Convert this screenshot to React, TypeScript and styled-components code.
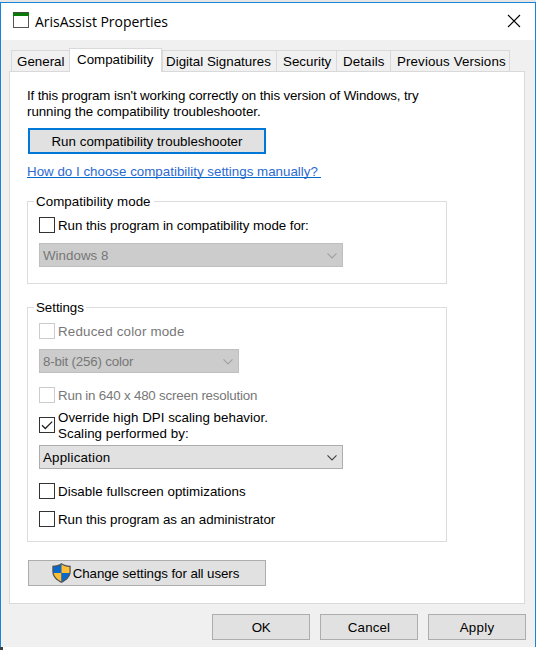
import React from 'react';
import styled, { createGlobalStyle } from 'styled-components';

const GlobalStyle = createGlobalStyle`
  *, *::before, *::after { box-sizing: border-box; }
  body { margin: 0; background: #fff; }
`;

const Desktop = styled.div`
  width: 542px;
  height: 650px;
  overflow: hidden;
  background: #fff;
  color: #000;
  font: 13.333px/16px "Liberation Sans", Arial, sans-serif;
`;

const BackdropStrip = styled.div`
  height: 2px;
  width: 536px;
  background: #e6e6e6;
`;

const BackdropCorner = styled.div`
  width: 3px;
  height: 3px;
  background: #3c4046;
`;

const Window = styled.div`
  display: flex;
  flex-direction: column;
  width: 536px;
  height: 645px;
  border: 1px solid #1883d7;
  border-bottom: 0;
  background: #f0f0f0;
`;

const TitleBar = styled.header`
  display: flex;
  flex: none;
  height: 37px;
  padding: 9px 13px 0 12px;
  background: #fff;
`;

const Title = styled.h1`
  flex: 1;
  margin: 0 0 0 6px;
  font: 400 14px/20px "Open Sans", sans-serif;
  letter-spacing: -0.03px;
`;

const CloseButton = styled.button`
  width: 16px;
  height: 16px;
  margin-top: 1px;
  padding: 0;
  border: 0;
  background: none;
  svg { display: block; }
`;

const Tabs = styled.nav`
  display: flex;
  align-items: flex-end;
  height: 31px;
  padding-left: 10px;
`;

const Tab = styled.button<{
  $width: number;
  $spacing: number;
  $inset?: number;
  $active?: boolean;
  $last?: boolean;
}>`
  display: flex;
  flex: none;
  align-items: flex-start;
  width: ${p => p.$width}px;
  height: ${p => (p.$active ? 24 : 21)}px;
  margin-bottom: ${p => (p.$active ? '-1px' : '0')};
  padding: 3px 0 0 ${p => p.$inset ?? 5}px;
  border: 1px solid #d9d9d9;
  border-bottom: 0;
  border-right-width: ${p => (p.$active || p.$last ? 1 : 0)}px;
  background: ${p => (p.$active ? '#fff' : '#f0f0f0')};
  z-index: ${p => (p.$active ? 1 : 0)};
  color: inherit;
  font: inherit;
  letter-spacing: ${p => p.$spacing}px;
  white-space: nowrap;
`;

const Panel = styled.main`
  flex: none;
  width: 516px;
  height: 533px;
  margin-left: 8px;
  padding: 16px 0 0 17px;
  border: 1px solid #d9d9d9;
  background: #fff;
`;

const Text = styled.span<{ $spacing?: number }>`
  display: block;
  letter-spacing: ${p => p.$spacing ?? 0}px;
  white-space: nowrap;
`;

const HelpLink = styled.a`
  display: block;
  width: 294px;
  height: 18px;
  margin-top: 10px;
  background: linear-gradient(#0066cc, #0066cc) 0 13px / 100% 1px no-repeat;
  color: #2b6bd0;
  letter-spacing: 0.01px;
  white-space: nowrap;
`;

const Button = styled.button<{ $width: number; $primary?: boolean; $spacing: number }>`
  display: flex;
  flex: none;
  align-items: center;
  justify-content: center;
  width: ${p => p.$width}px;
  height: 26px;
  padding: 1px 0 0;
  border: ${p => (p.$primary ? '2px solid #0078d7' : '1px solid #adadad')};
  background: #e1e1e1;
  color: inherit;
  font: inherit;
  letter-spacing: ${p => p.$spacing}px;
  white-space: nowrap;
`;

const AdminButton = styled(Button)`
  gap: 2px;
  padding: 1px 3px 0 0;
  svg { margin-top: -2px; }
`;

const TroubleshootArea = styled.div`
  margin: 8px 0 0 1px;
`;

const AdminArea = styled.div`
  margin: 18px 0 0 1px;
`;

const Group = styled.section<{ $height: number; $gap: number }>`
  width: 420px;
  height: ${p => p.$height}px;
  margin-top: ${p => p.$gap}px;
  padding-left: 11px;
  border: 1px solid #dcdcdc;
`;

const GroupTitle = styled.h2<{ $width: number; $spacing: number }>`
  width: ${p => p.$width}px;
  height: 16px;
  margin: -8px 0 7px -5px;
  padding-left: 2px;
  background: #fff;
  font: inherit;
  letter-spacing: ${p => p.$spacing}px;
  white-space: nowrap;
`;

const OptionRow = styled.label<{ $gap?: number; $disabled?: boolean }>`
  display: flex;
  gap: 3px;
  margin-top: ${p => p.$gap ?? 0}px;
  color: ${p => (p.$disabled ? '#777' : '#000')};
`;

const Box = styled.span<{ $disabled?: boolean; $offset?: number }>`
  flex: none;
  width: 16px;
  height: 16px;
  margin-top: ${p => p.$offset ?? 0}px;
  border: 1px solid ${p => (p.$disabled ? '#ccc' : '#333')};
  background: #fff;
  svg { display: block; }
`;

const OptionText = styled.span<{ $top?: number }>`
  height: ${p => (p.$top === 0 ? 32 : 16)}px;
  padding-top: ${p => p.$top ?? 1}px;
`;

const Select = styled.div<{ $width: number; $gap: number; $disabled?: boolean }>`
  display: flex;
  align-items: center;
  justify-content: space-between;
  width: ${p => p.$width}px;
  height: 24px;
  margin-top: ${p => p.$gap}px;
  padding: 1px 5px 0 3px;
  border: 1px solid ${p => (p.$disabled ? '#bfbfbf' : '#adadad')};
  background: ${p => (p.$disabled ? '#ccc' : '#e1e1e1')};
  color: ${p => (p.$disabled ? '#777' : '#000')};
`;

const Footer = styled.footer`
  display: flex;
  gap: 10px;
  justify-content: flex-end;
  padding: 10px 9px 0 0;
`;

const WindowIcon = () => (
  <svg width="16" height="16" viewBox="0 0 16 16" shapeRendering="crispEdges">
    <rect x="0.5" y="0.5" width="15" height="15" fill="#fff" stroke="#555" />
    <rect x="0" y="0" width="16" height="4" fill="#087a08" />
    <path d="M0 .5H16" stroke="#3f503f" />
  </svg>
);

const Chevron = ({ color }: { color: string }) => (
  <svg width="10" height="6" viewBox="0 0 10 6" fill="none" stroke={color} strokeWidth="1.1">
    <path d="M.5 .4 5 4.900 9.500 .4" />
  </svg>
);

const Shield = () => (
  <svg width="19" height="20" viewBox="0 0 19 20">
    <path d="M9.500 0C7.300 1.800 4 2.700 .3 2.800v5.700c0 5.300 4 9 9.200 11.400 5.200-2.400 9.200-6.100 9.200-11.400V2.800C15 2.700 11.700 1.800 9.500 0Z" fill="#50555a" />
    <path d="M9.500 1.500C7.300 3 4.700 3.800 1.600 4V10h7.900Z" fill="#0868cc" />
    <path d="M9.500 1.500c2.200 1.500 4.800 2.300 7.900 2.500V10H9.500Z" fill="#ffbd35" />
    <path d="M1.700 10c.7 3.800 3.800 6.600 7.800 8.600V10Z" fill="#ffbd35" />
    <path d="M17.300 10c-.7 3.800-3.800 6.600-7.800 8.600V10Z" fill="#0868cc" />
  </svg>
);

interface OptionProps {
  label: string;
  spacing: number;
  gap?: number;
  disabled?: boolean;
}

const Option = ({ label, spacing, gap, disabled }: OptionProps) => (
  <OptionRow $gap={gap} $disabled={disabled}>
    <Box $disabled={disabled} />
    <OptionText><Text $spacing={spacing}>{label}</Text></OptionText>
  </OptionRow>
);

interface ComboProps extends OptionProps {
  width: number;
}

const Combo = ({ label, spacing, gap = 10, width, disabled }: ComboProps) => (
  <Select $width={width} $gap={gap} $disabled={disabled}>
    <Text $spacing={spacing}>{label}</Text>
    <Chevron color={disabled ? '#a0a0a0' : '#404040'} />
  </Select>
);

export default function App() {
  return (
    <Desktop>
      <GlobalStyle />
      <BackdropStrip />
      <Window>
        <TitleBar>
          <WindowIcon />
          <Title>ArisAssist Properties</Title>
          <CloseButton aria-label="Close">
            <svg width="16" height="16" viewBox="0 0 16 16" stroke="#000" strokeWidth="1.1">
              <path d="M2 2 14 14M14 2 2 14" />
            </svg>
          </CloseButton>
        </TitleBar>
        <Tabs>
          <Tab $width={58} $spacing={0.01}>General</Tab>
          <Tab $width={93} $spacing={0.01} $inset={7} $active>Compatibility</Tab>
          <Tab $width={114} $spacing={0.02} $inset={3}>Digital Signatures</Tab>
          <Tab $width={60} $spacing={0.02} $inset={6}>Security</Tab>
          <Tab $width={54} $spacing={0.12} $inset={6}>Details</Tab>
          <Tab $width={120} $spacing={0.12} $inset={6} $last>Previous Versions</Tab>
        </Tabs>
        <Panel>
          <Text $spacing={-0.125}>If this program isn't working correctly on this version of Windows, try</Text>
          <Text $spacing={-0.05}>running the compatibility troubleshooter.</Text>
          <TroubleshootArea>
            <Button $width={238} $spacing={0.02} $primary>Run compatibility troubleshooter</Button>
          </TroubleshootArea>
          <HelpLink>How do I choose compatibility settings manually?</HelpLink>
          <Group $height={83} $gap={19}>
            <GroupTitle $width={120} $spacing={0.07}>Compatibility mode</GroupTitle>
            <Option label="Run this program in compatibility mode for:" spacing={-0.06} />
            <Combo label="Windows 8" spacing={0.02} width={304} disabled />
          </Group>
          <Group $height={235} $gap={23}>
            <GroupTitle $width={52} $spacing={-0.04}>Settings</GroupTitle>
            <Option label="Reduced color mode" spacing={0.2} disabled />
            <Combo label="8-bit (256) color" spacing={-0.18} width={200} disabled />
            <Option label="Run in 640 x 480 screen resolution" spacing={-0.2} gap={14} disabled />
            <OptionRow $gap={7}>
              <Box $offset={7}>
                <svg width="14" height="14" viewBox="0 0 14 14" fill="none" stroke="#222" strokeWidth="1.3">
                  <path d="M2 7.300 5.300 10.500 12.200 3.600" />
                </svg>
              </Box>
              <OptionText $top={0}>
                <Text $spacing={0.03}>Override high DPI scaling behavior.</Text>
                <Text $spacing={0.05}>Scaling performed by:</Text>
              </OptionText>
            </OptionRow>
            <Combo label="Application" spacing={0.2} gap={3} width={304} />
            <Option label="Disable fullscreen optimizations" spacing={0.03} gap={14} />
            <Option label="Run this program as an administrator" spacing={-0.06} gap={12} />
          </Group>
          <AdminArea>
            <AdminButton $width={238} $spacing={-0.08}><Shield />Change settings for all users</AdminButton>
          </AdminArea>
        </Panel>
        <Footer>
          <Button $width={98} $spacing={-0.5}>OK</Button>
          <Button $width={98} $spacing={0.15}>Cancel</Button>
          <Button $width={98} $spacing={0.25}>Apply</Button>
        </Footer>
      </Window>
      <BackdropCorner />
    </Desktop>
  );
}
